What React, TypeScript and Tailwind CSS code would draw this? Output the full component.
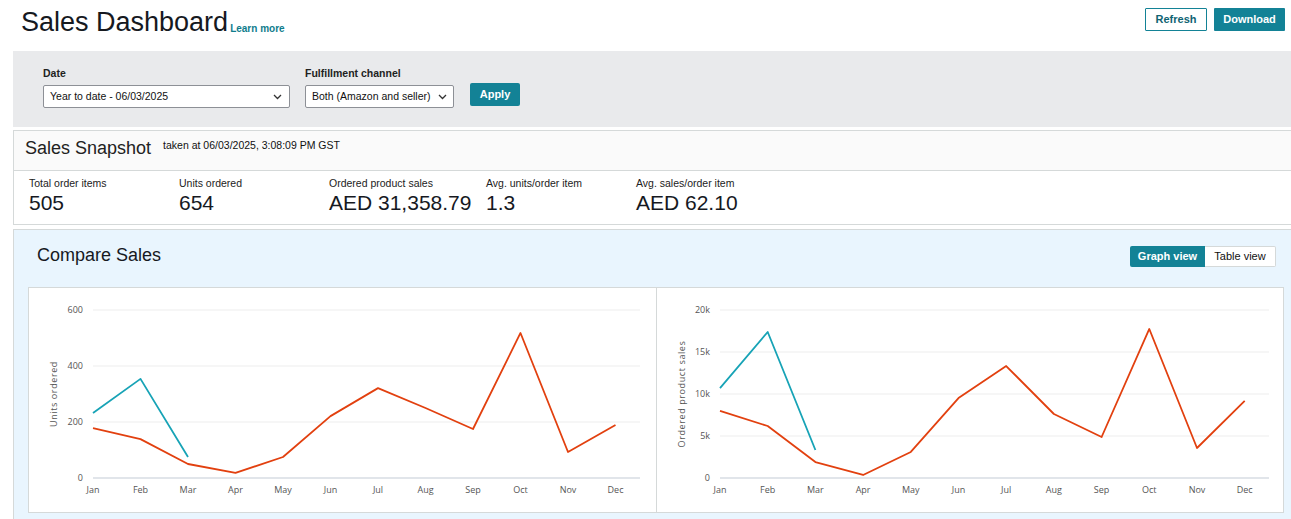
import React from "react";

const MONTHS = ["Jan","Feb","Mar","Apr","May","Jun","Jul","Aug","Sep","Oct","Nov","Dec"];

type ChartProps = {
  ticks: { v: number; label: string }[];
  max: number;
  red: number[];
  teal: number[];
  x0: number;
  x1: number;
  step: number;
  title: string;
};

function Chart({ ticks, max, red, teal, x0, x1, step, title }: ChartProps) {
  const yOf = (v: number) => 190 - (v * 168) / max;
  const pts = (arr: number[]) => arr.map((v, i) => `${x0 + step * i},${yOf(v)}`).join(" ");
  return (
    <svg width="626" height="224" className="block">
      {ticks.map((t) => (
        <g key={t.label}>
          <line
            x1={x0}
            x2={x1}
            y1={yOf(t.v)}
            y2={yOf(t.v)}
            stroke={t.v === 0 ? "#e1e5ea" : "#eeeeee"}
            strokeWidth={t.v === 0 ? 2 : 1.2}
          />
          <text x={x0 - 10} y={yOf(t.v) + 3} textAnchor="end" fontSize="9" fill="#555" fontFamily="'Open Sans', 'Liberation Sans', sans-serif">
            {t.label}
          </text>
        </g>
      ))}
      {MONTHS.map((m, i) => (
        <text key={m} x={x0 + step * i} y={205} textAnchor="middle" fontSize="9" fill="#555" fontFamily="'Open Sans', 'Liberation Sans', sans-serif">
          {m}
        </text>
      ))}
      <text
        transform={`translate(28,106) rotate(-90)`}
        textAnchor="middle"
        fontSize="9"
        fill="#555"
        letterSpacing="0.6"
        fontFamily="'Open Sans', 'Liberation Sans', sans-serif"
      >
        {title}
      </text>
      <polyline points={pts(red)} fill="none" stroke="#e2400f" strokeWidth="1.8" strokeLinejoin="round" />
      <polyline points={pts(teal)} fill="none" stroke="#17a3b6" strokeWidth="1.8" strokeLinejoin="round" />
    </svg>
  );
}

function Chevron() {
  return (
    <svg width="9" height="6" viewBox="0 0 9 6" className="shrink-0">
      <path d="M1 1 L4.5 4.5 L8 1" fill="none" stroke="#333" strokeWidth="1.3" />
    </svg>
  );
}

export default function App() {
  return (
    <div className="w-full overflow-hidden bg-white text-[#111] h-[519px]" style={{ fontFamily: "'Liberation Sans', Arial, sans-serif" }}>
      <div className="w-[1298px]">
        {/* Header */}
        <div className="flex h-[51px] items-start justify-between pl-[21px] pr-[13px] pt-[4px]">
          <div className="flex items-end">
            <h1 className="text-[27px] leading-[36px] text-[#16191f]">Sales Dashboard</h1>
            <a className="mb-[4px] ml-[2px] text-[10px] font-bold leading-[14px] text-[#0f7c8c]">Learn more</a>
          </div>
          <div className="mt-[4px] flex gap-[7px]">
            <button className="h-[23px] w-[62px] rounded-[1px] border border-[#138296] bg-white text-[11px] font-bold text-[#0f6473]">Refresh</button>
            <button className="h-[23px] w-[71px] rounded-[1px] bg-[#138296] text-[11px] font-bold text-white">Download</button>
          </div>
        </div>

        {/* Filters */}
        <div className="ml-[13px] flex h-[76px] items-end gap-[15px] bg-[#e9eaec] pb-[19px] pl-[30px]">
          <div className="flex flex-col">
            <label className="mb-[5px] text-[10.5px] font-bold leading-[14px] text-[#222]">Date</label>
            <div className="flex h-[23px] w-[247px] items-center justify-between whitespace-nowrap rounded-[2px] border border-[#8d9096] bg-white pl-[6px] pr-[7px] text-[10.5px] text-[#111]">
              <span>Year to date - 06/03/2025</span>
              <Chevron />
            </div>
          </div>
          <div className="flex flex-col">
            <label className="mb-[5px] text-[10.5px] font-bold leading-[14px] text-[#222]">Fulfillment channel</label>
            <div className="flex h-[23px] w-[149px] items-center justify-between whitespace-nowrap rounded-[2px] border border-[#8d9096] bg-white pl-[6px] pr-[6px] text-[10.5px] text-[#111]">
              <span>Both (Amazon and seller)</span>
              <Chevron />
            </div>
          </div>
          <button className="mb-[2px] ml-[1px] h-[23px] w-[50px] rounded-[2px] bg-[#138296] text-[11px] font-bold text-white">Apply</button>
        </div>

        {/* Snapshot */}
        <div className="ml-[13px] mt-[3px] border border-[#d5d9d9] bg-white">
          <div className="flex h-[40px] items-center border-b border-[#d5d9d9] bg-[#fafafa] pb-[6px] pl-[11px]">
            <span className="text-[18px] leading-[24px] text-[#222]">Sales Snapshot</span>
            <span className="ml-[12px] mt-[-3px] text-[10.5px] text-[#111]">taken at 06/03/2025, 3:08:09 PM GST</span>
          </div>
          <div className="flex pb-[8px] pl-[15px] pt-[5px]">
            {[
              ["Total order items", "505", "w-[150px]"],
              ["Units ordered", "654", "w-[150px]"],
              ["Ordered product sales", "AED 31,358.79", "w-[157px]"],
              ["Avg. units/order item", "1.3", "w-[150px]"],
              ["Avg. sales/order item", "AED 62.10", "w-[150px]"],
            ].map(([l, v, w]) => (
              <div key={l} className={`${w} flex flex-col`}>
                <span className="text-[10.5px] leading-[14px] text-[#222]">{l}</span>
                <span className="whitespace-nowrap text-[21px] leading-[26px] text-[#16191f]">{v}</span>
              </div>
            ))}
          </div>
        </div>

        {/* Compare Sales */}
        <div className="ml-[13px] mt-[4px] border border-[#d5d9d9] bg-[#e9f5fe] pb-[14px]">
          <div className="flex h-[57px] items-start justify-between pl-[23px] pr-[21px] pt-[13px]">
            <span className="text-[18px] leading-[24px] text-[#16191f]">Compare Sales</span>
            <div className="mt-[3px] flex">
              <button className="h-[21px] w-[75px] rounded-l-[2px] bg-[#138296] text-[11px] font-bold text-white">Graph view</button>
              <button className="h-[21px] w-[71px] rounded-r-[2px] border border-l-0 border-[#d5d9d9] bg-white text-[11px] text-[#111]">Table view</button>
            </div>
          </div>
          <div className="mx-[14px] grid h-[226px] w-[1256px] grid-cols-2 border border-[#d5d9d9] bg-white">
            <div>
              <Chart
                ticks={[{ v: 600, label: "600" }, { v: 400, label: "400" }, { v: 200, label: "200" }, { v: 0, label: "0" }]}
                max={600}
                red={[178, 139, 50, 18, 75, 221, 321, 250, 175, 518, 93, 189]}
                teal={[232, 354, 75]}
                x0={64}
                x1={611}
                step={47.5}
                title="Units ordered"
              />
            </div>
            <div className="border-l border-[#d5d9d9]">
              <Chart
                ticks={[{ v: 20000, label: "20k" }, { v: 15000, label: "15k" }, { v: 10000, label: "10k" }, { v: 5000, label: "5k" }, { v: 0, label: "0" }]}
                max={20000}
                red={[7980, 6190, 1900, 360, 3100, 9520, 13330, 7620, 4880, 17740, 3570, 9170]}
                teal={[10700, 17380, 3330]}
                x0={63}
                x1={612}
                step={47.7}
                title="Ordered product sales"
              />
            </div>
          </div>
        </div>
      </div>
    </div>
  );
}
